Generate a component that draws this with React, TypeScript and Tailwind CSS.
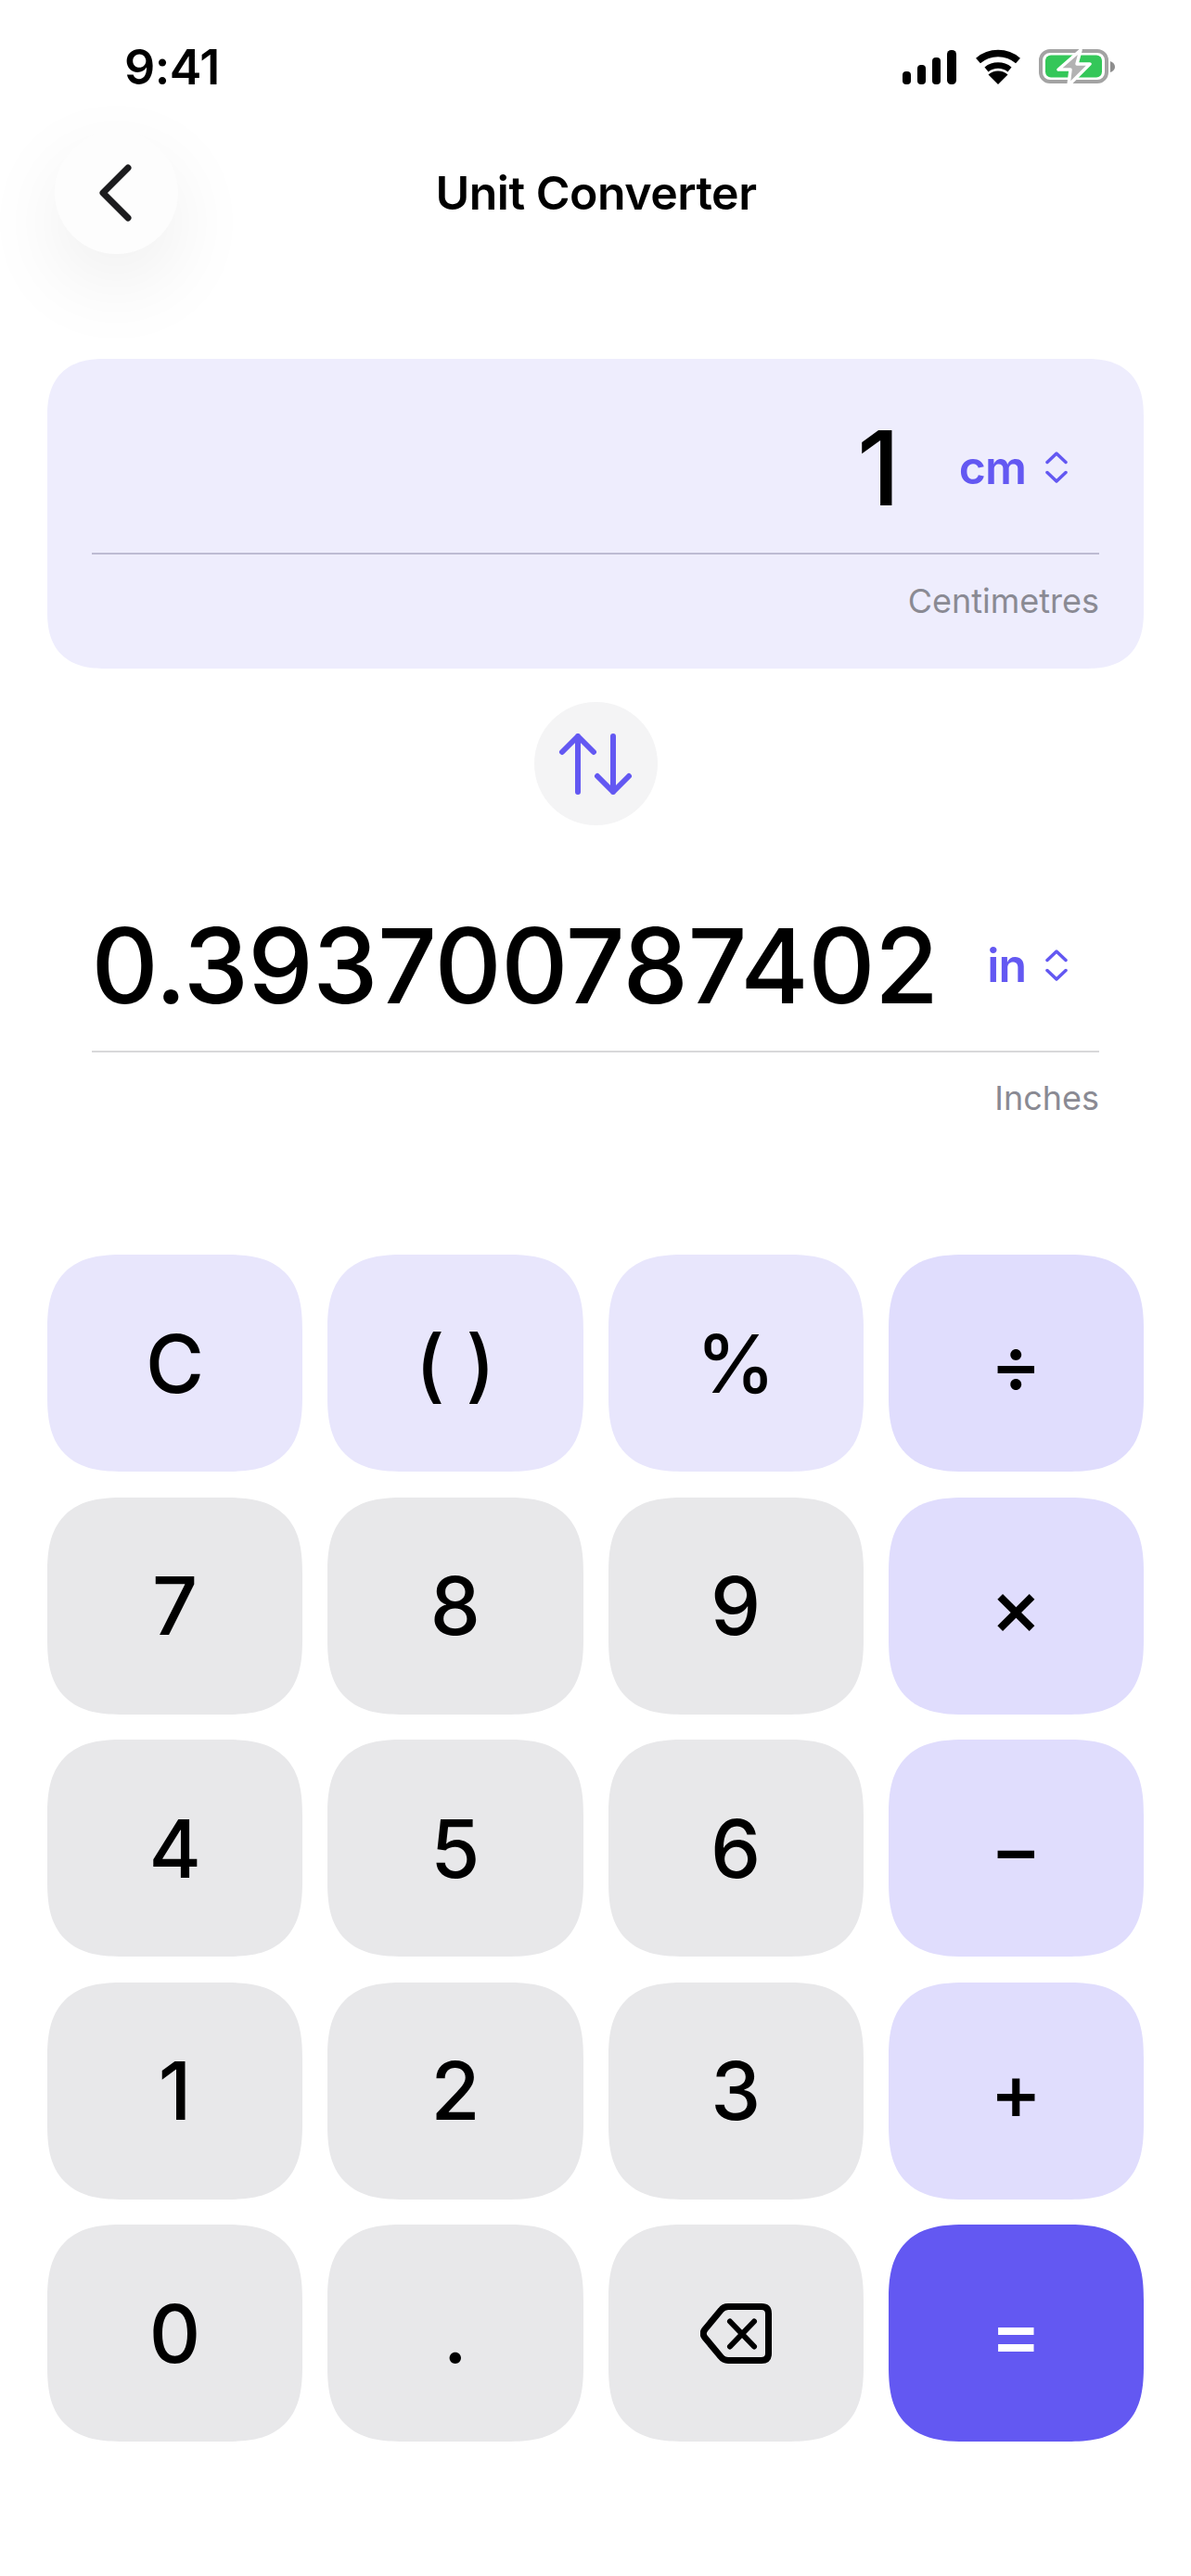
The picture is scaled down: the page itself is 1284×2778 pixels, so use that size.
import React from "react";

const squircle = "rounded-[82px] [corner-shape:superellipse(1.4)]";

function Chevrons() {
  return (
    <svg width="24" height="34" viewBox="0 0 24 34" fill="none" stroke="#6358F2" strokeWidth="3.5" strokeLinecap="round" strokeLinejoin="round">
      <path d="M2 11.5 12 2l10 9.5" />
      <path d="M2 22.5 12 32l10-9.5" />
    </svg>
  );
}

function ValueRow({ value, unit, gap }: { value: string; unit: string; gap: string }) {
  return (
    <div className={`flex h-[140px] items-center justify-end pr-[34px] ${gap}`}>
      <span className="text-[112px] leading-[140px] font-medium tracking-[-0.6px] text-black">{value}</span>
      <span className="flex items-center gap-[21px]">
        <span className="text-[50px] leading-[60px] font-semibold tracking-[-1px] text-[#6358F2]">{unit}</span>
        <Chevrons />
      </span>
    </div>
  );
}

type Key = { label: React.ReactNode; bg: string; text: string };

const lilac = "bg-[#E8E6FC]";
const gray = "bg-[#E8E8EA]";
const op = "bg-[#E0DDFD]";
const digit = "pt-[2px] text-[86px] font-medium text-black";
const opText = "pt-[2px] text-[84px] font-medium text-black";

const Backspace = (
  <svg width="77" height="65" viewBox="0 0 77 65" fill="none" stroke="#000" strokeWidth="7" strokeLinecap="round" strokeLinejoin="round" aria-label="delete">
    <path d="M30 3.5h36q7.500 0 7.500 7.500v43q0 7.500-7.500 7.500H30q-5 0-8-4L5 37q-3.500-4.500 0-9L22 7.500q3-4 8-4Z" />
    <path d="M32 19.500l26 27M58 19.500l-26 27" strokeWidth="6" />
  </svg>
);

const keys: Key[] = [
  { label: "C", bg: lilac, text: digit },
  { label: "( )", bg: lilac, text: digit },
  { label: "%", bg: lilac, text: digit },
  { label: "÷", bg: op, text: opText },
  { label: "7", bg: gray, text: digit },
  { label: "8", bg: gray, text: digit },
  { label: "9", bg: gray, text: digit },
  { label: "×", bg: op, text: opText },
  { label: "4", bg: gray, text: digit },
  { label: "5", bg: gray, text: digit },
  { label: "6", bg: gray, text: digit },
  { label: "−", bg: op, text: opText },
  { label: "1", bg: gray, text: digit },
  { label: "2", bg: gray, text: digit },
  { label: "3", bg: gray, text: digit },
  { label: "+", bg: op, text: opText },
  { label: "0", bg: gray, text: digit },
  { label: ".", bg: gray, text: digit },
  { label: Backspace, bg: gray, text: "" },
  { label: "=", bg: "bg-[#6358F2]", text: "pt-[2px] text-[84px] font-medium text-white" },
];

export default function App() {
  return (
    <div className="h-[2778px] w-[1284px] overflow-hidden bg-white font-['Inter',sans-serif]">
      {/* status bar */}
      <div className="flex h-[37px] translate-y-[54px] items-center justify-between pr-[82px] pl-[134px]">
        <span className="text-[52px] leading-[37px] font-semibold tracking-[-0.5px] text-black">9:41</span>
        <svg width="229" height="41" viewBox="973 52 229 41" fill="none">
          <rect x="973" y="77" width="9" height="14" rx="4" fill="#000" />
          <rect x="989" y="70" width="9" height="21" rx="4" fill="#000" />
          <rect x="1005" y="62" width="9" height="29" rx="4" fill="#000" />
          <rect x="1021" y="54" width="10" height="37" rx="4.500" fill="#000" />
          <path d="M1054.500 65.500a33 33 0 0 1 43 0" stroke="#000" strokeWidth="7.500" />
          <path d="M1063.500 75a20 20 0 0 1 25 0" stroke="#000" strokeWidth="6.500" />
          <path d="M1076 91l-10.500-10.500a16 16 0 0 1 21 0Z" fill="#000" />
          <rect x="1122" y="55" width="71" height="33" rx="10" stroke="#A3A3A3" strokeWidth="4" />
          <path d="M1197 66q5 2 5 6t-5 6Z" fill="#8E8E8E" />
          <rect x="1127" y="59.500" width="61" height="24" rx="6" fill="#34C759" />
          <path d="M1165 54l-24 21h13l-2 17 23-23h-14l4-15Z" fill="#B2B2B2" stroke="#fff" strokeWidth="3.500" strokeLinejoin="round" />
        </svg>
      </div>

      {/* header */}
      <div className="mt-[104px] grid grid-cols-[1fr_auto_1fr] items-center pl-[59px]">
        <div className="flex h-[133px] w-[133px] items-center justify-center rounded-full bg-[#FDFDFD] shadow-[0_32px_90px_rgba(0,0,0,0.07)]">
          <svg width="40" height="62" viewBox="0 0 40 62" fill="none" stroke="#1C1C1E" strokeWidth="7" strokeLinecap="round" strokeLinejoin="round" className="-translate-x-[1px]">
            <path d="M33 4 6 31l27 27" />
          </svg>
        </div>
        <h1 className="-translate-x-[29px] text-[50px] leading-[60px] font-[580] tracking-[-0.5px] text-black">Unit Converter</h1>
        <div />
      </div>

      <div className="px-[51px]">
        {/* source card */}
        <div className="mt-[113px] h-[334px] rounded-[62px] bg-[#EEEDFD] px-[48px] pt-[47px] [corner-shape:superellipse(1.3)]">
          <ValueRow value="1" unit="cm" gap="gap-[64px]" />
          <div className="mt-[22px] h-[2px] bg-[#BDBBD3]" />
          <p className="mt-[27px] text-right text-[36px] leading-[46px] text-[#8A8A93]">Centimetres</p>
        </div>

        {/* swap */}
        <div className="mt-[36px] flex justify-center">
          <div className="flex h-[133px] w-[133px] items-center justify-center rounded-full bg-[#F4F4F5]">
            <svg width="80" height="66" viewBox="0 0 80 66" fill="none" stroke="#6358F2" strokeWidth="6" strokeLinecap="round" strokeLinejoin="round">
              <path d="M21 63V3M4 20 21 3l17 17" />
              <path d="M59 3v60M42 46l17 17 17-17" />
            </svg>
          </div>
        </div>

        {/* result */}
        <div className="mt-[81px] px-[48px]">
          <ValueRow value="0.393700787402" unit="in" gap="gap-[53px]" />
          <div className="mt-[22px] h-[2px] bg-[#D8D8DA]" />
          <p className="mt-[26px] text-right text-[36px] leading-[46px] text-[#8A8A93]">Inches</p>
        </div>

        {/* keypad */}
        <div className="mt-[146px] grid grid-cols-4 gap-x-[27px] gap-y-[27.500px]">
          {keys.map((k, i) => (
            <button key={i} className={`flex h-[234px] items-center justify-center ${squircle} ${k.bg} ${k.text}`}>
              {k.label}
            </button>
          ))}
        </div>
      </div>
    </div>
  );
}
